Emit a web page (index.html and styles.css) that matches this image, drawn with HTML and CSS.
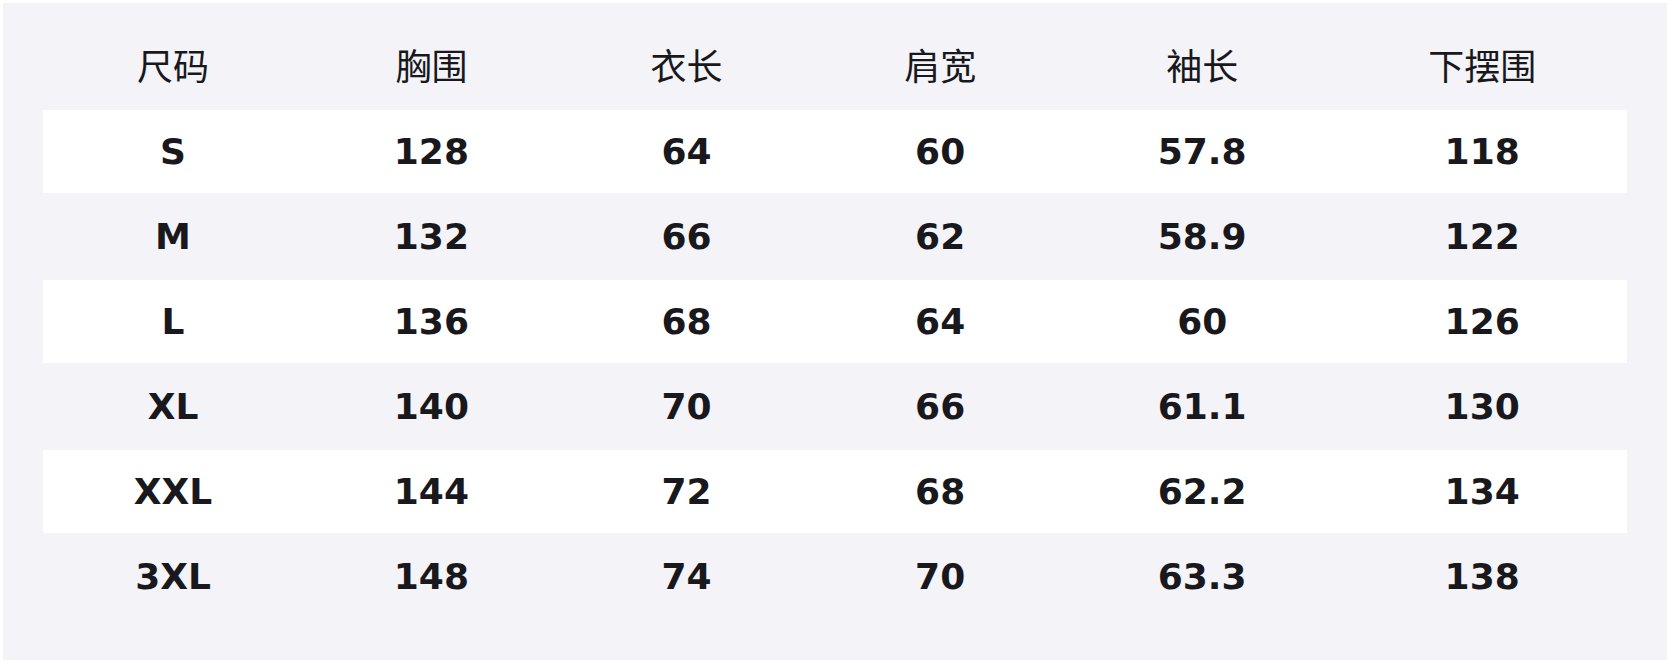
FILE: index.html
```html
<!DOCTYPE html>
<html lang="zh">
<head>
<meta charset="utf-8">
<title>尺码表</title>
<link rel="stylesheet" href="styles.css">
</head>
<body>
<div class="panel">
  <div class="size-table">
    <div class="row head"><div class="cell">尺码</div><div class="cell">胸围</div><div class="cell">衣长</div><div class="cell">肩宽</div><div class="cell">袖长</div><div class="cell">下摆围</div></div>
    <div class="row alt"><div class="cell">S</div><div class="cell">128</div><div class="cell">64</div><div class="cell">60</div><div class="cell">57.8</div><div class="cell">118</div></div>
    <div class="row"><div class="cell">M</div><div class="cell">132</div><div class="cell">66</div><div class="cell">62</div><div class="cell">58.9</div><div class="cell">122</div></div>
    <div class="row alt"><div class="cell">L</div><div class="cell">136</div><div class="cell">68</div><div class="cell">64</div><div class="cell">60</div><div class="cell">126</div></div>
    <div class="row"><div class="cell">XL</div><div class="cell">140</div><div class="cell">70</div><div class="cell">66</div><div class="cell">61.1</div><div class="cell">130</div></div>
    <div class="row alt"><div class="cell">XXL</div><div class="cell">144</div><div class="cell">72</div><div class="cell">68</div><div class="cell">62.2</div><div class="cell">134</div></div>
    <div class="row"><div class="cell">3XL</div><div class="cell">148</div><div class="cell">74</div><div class="cell">70</div><div class="cell">63.3</div><div class="cell">138</div></div>
  </div>
</div>
</body>
</html>
```
FILE: styles.css
```css
html, body {
  margin: 0;
  padding: 0;
  background: #ffffff;
}
body {
  padding: 3px;
  font-family: "DejaVu Sans", "Noto Sans CJK SC", sans-serif;
  color: #18181d;
}
.panel {
  background: #f3f3f8;
  height: 657px;
  box-sizing: border-box;
  padding: 20px 40px 40px;
}
.size-table {
  display: grid;
  grid-template-columns: repeat(6, auto);
  row-gap: 2px;
  padding: 2px 0;
}
.row {
  display: contents;
}
.cell {
  height: 83px;
  display: flex;
  align-items: center;
  justify-content: center;
  font-size: 36px;
  line-height: 1;
  font-weight: 700;
  white-space: nowrap;
}
.head .cell {
  font-family: "Noto Sans CJK SC", sans-serif;
  font-weight: 400;
  box-sizing: border-box;
  padding-bottom: 6px;
}
.alt .cell {
  background: #ffffff;
}
```
